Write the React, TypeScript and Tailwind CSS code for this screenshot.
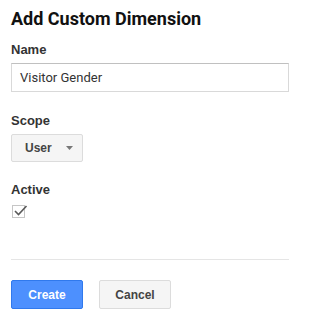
export default function App() {
  return (
    <div className="min-h-screen bg-white pl-[11px] pt-[7px]">
      <h1 className="font-['Roboto',sans-serif] text-[18px] leading-[24px] font-bold text-[#111]">
        Add Custom Dimension
      </h1>

      {/* Name */}
      <div className="mt-[11px] font-['Liberation_Sans',Arial,sans-serif] text-[13px] leading-[16px] font-bold text-[#333]">
        Name
      </div>
      <div className="mt-[5px] flex h-[29px] w-[278px] items-center border border-[#d9d9d9] border-t-[#c0c0c0] px-[8px] font-['Roboto',sans-serif] text-[13px] text-[#333]">
        Visitor Gender
      </div>

      {/* Scope */}
      <div className="mt-[21px] font-['Liberation_Sans',Arial,sans-serif] text-[13px] leading-[16px] font-bold text-[#333]">
        Scope
      </div>
      <div className="mt-[5px] flex h-[28px] w-[72px] items-center rounded-[2px] border border-[#dcdcdc] bg-[#f5f5f5] pl-[13px] font-['Liberation_Sans',Arial,sans-serif] text-[12px] font-bold text-[#444]">
        <span>User</span>
        <svg width="7" height="4" viewBox="0 0 7 4" className="ml-[14px]">
          <path d="M0 0 H7 L3.5 4 Z" fill="#777" />
        </svg>
      </div>

      {/* Active */}
      <div className="mt-[20px] font-['Liberation_Sans',Arial,sans-serif] text-[13px] leading-[16px] font-bold text-[#333]">
        Active
      </div>
      <div className="relative ml-[1px] mt-[7px] h-[13px] w-[13px] border border-[#c6c6c6] bg-white">
        <svg width="15" height="14" viewBox="0 0 15 14" className="absolute left-[0px] top-[-3px]">
          <path d="M2 8 L5.5 11.5 L13.5 3" fill="none" stroke="#5a5a5a" strokeWidth="1.6" />
        </svg>
      </div>

      <div className="mt-[41px] h-px w-[278px] bg-[#e5e5e5]" />

      <div className="mt-[20px] flex gap-[16px] font-['Liberation_Sans',Arial,sans-serif] text-[12px] font-bold">
        <button className="h-[29px] w-[72px] rounded-[2px] border border-[#3079ed] bg-[#4d90fe] text-white">
          Create
        </button>
        <button className="h-[29px] w-[72px] rounded-[2px] border border-[#dcdcdc] bg-[#f5f5f5] text-[#444]">
          Cancel
        </button>
      </div>
    </div>
  );
}
